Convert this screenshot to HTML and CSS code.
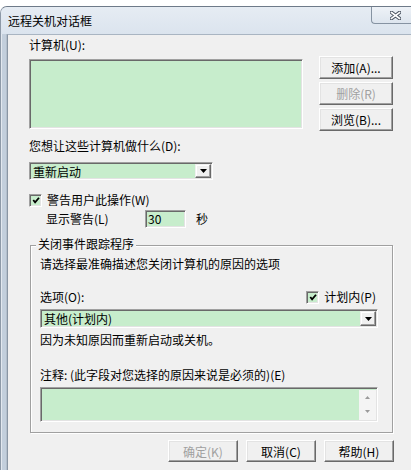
FILE: index.html
```html
<!DOCTYPE html>
<html lang="zh-CN">
<head>
<meta charset="utf-8">
<title>远程关机对话框</title>
<link rel="stylesheet" href="styles.css">
</head>
<body>
<div class="win">
  <div class="shell">
    <div class="titlebar">
      <span class="title">远程关机对话框</span>
      <div class="close">
        <svg width="11" height="9" viewBox="0 0 11 9">
          <path d="M1.5 1.5 L9.5 7.5 M9.5 1.5 L1.5 7.5" stroke="#4d5663" stroke-width="3.6" stroke-linecap="square" fill="none"/>
          <path d="M1.5 1.5 L9.5 7.5 M9.5 1.5 L1.5 7.5" stroke="#ffffff" stroke-width="1.6" stroke-linecap="square" fill="none"/>
        </svg>
      </div>
    </div>
    <div class="client">
      <div class="top-row">
        <div class="left-col">
          <div class="lbl">计算机(U):</div>
          <div class="sunken listbox"></div>
        </div>
        <div class="side-btns">
          <div class="btn side">添加(A)...</div>
          <div class="btn side disabled">删除(R)</div>
          <div class="btn side">浏览(B)...</div>
        </div>
      </div>

      <div class="lbl what">您想让这些计算机做什么(D):</div>
      <div class="sunken combo combo-action">
        <span class="combo-text">重新启动</span>
        <span class="combo-btn"><svg width="7" height="4" viewBox="0 0 7 4"><polygon points="0,0 7,0 3.5,4" fill="#000"/></svg></span>
      </div>

      <div class="check-row warn">
        <span class="sunken checkbox"><svg width="11" height="11" viewBox="0 0 11 11"><polyline points="2.5,5 4.5,7.5 8.8,2.5" fill="none" stroke="#000" stroke-width="2"/></svg></span>
        <span class="lbl">警告用户此操作(W)</span>
      </div>
      <div class="time-row">
        <span class="lbl time-lbl">显示警告(L)</span>
        <span class="sunken input">30</span>
        <span class="lbl sec">秒</span>
      </div>

      <div class="group">
        <span class="legend">关闭事件跟踪程序</span>
        <div class="lbl">请选择最准确描述您关闭计算机的原因的选项</div>
        <div class="opt-row">
          <span class="lbl">选项(O):</span>
          <span class="check-row">
            <span class="sunken checkbox"><svg width="11" height="11" viewBox="0 0 11 11"><polyline points="2.5,5 4.5,7.5 8.8,2.5" fill="none" stroke="#000" stroke-width="2"/></svg></span>
            <span class="lbl">计划内(P)</span>
          </span>
        </div>
        <div class="sunken combo combo-reason">
          <span class="combo-text">其他(计划内)</span>
          <span class="combo-btn"><svg width="7" height="4" viewBox="0 0 7 4"><polygon points="0,0 7,0 3.5,4" fill="#000"/></svg></span>
        </div>
        <div class="lbl reason">因为未知原因而重新启动或关机。</div>
        <div class="lbl note">注释: (此字段对您选择的原因来说是必须的)(E)</div>
        <div class="sunken textarea">
          <span class="ta-body"></span>
          <span class="scroll">
            <svg width="5" height="3" viewBox="0 0 5 3"><polygon points="2.5,0 5,3 0,3" fill="#9a9a9a"/></svg>
            <svg width="5" height="3" viewBox="0 0 5 3"><polygon points="0,0 5,0 2.5,3" fill="#9a9a9a"/></svg>
          </span>
        </div>
      </div>

      <div class="bottom-btns">
        <div class="btn bottom disabled">确定(K)</div>
        <div class="btn bottom">取消(C)</div>
        <div class="btn bottom">帮助(H)</div>
      </div>
    </div>
  </div>
</div>
</body>
</html>
```

FILE: styles.css
```css
* { box-sizing: border-box; }

html, body {
  margin: 0;
  padding: 0;
  background: #ffffff;
}

body {
  font-family: "Noto Sans CJK SC", "Noto Sans", sans-serif;
  font-size: 12px;
  color: #000;
}

.win {
  width: 411px;
  height: 470px;
  padding-top: 6px;
  overflow: hidden;
}

.shell {
  height: 464px;
  border-top: 1px solid #6e7a89;
  border-left: 1px solid #8e9aa8;
  border-top-left-radius: 7px;
  background: linear-gradient(to right, #e2e8ef 0, #e2e8ef 1px, #c3cfdc 1px, #c3cfdc 5px, #b3bfcc 5px, #b3bfcc 6px);
  display: flex;
  flex-direction: column;
  overflow: hidden;
}

.titlebar {
  height: 27px;
  flex-shrink: 0;
  display: flex;
  background: linear-gradient(#e6ecf3, #dbe4ee);
}

.title {
  align-self: center;
  padding-left: 7px;
  padding-top: 1px;
  font-size: 12px;
  line-height: 16px;
  color: #000;
}

.close {
  margin-left: auto;
  margin-right: -7px;
  flex-shrink: 0;
  width: 47px;
  height: 17px;
  border-left: 1px solid #8693a2;
  border-bottom: 1px solid #8693a2;
  border-bottom-left-radius: 4px;
  background: linear-gradient(#eef2f7, #dde5ee);
  display: flex;
  align-items: center;
  justify-content: center;
  padding-top: 1px;
}

.client {
  flex: 1;
  margin-left: 6px;
  border-left: 1px solid #8a96a4;
  border-top: 1px solid #a9b5c2;
  background: #f0f0f0;
  padding: 1px 18px 0 21px;
  display: flex;
  flex-direction: column;
}

.lbl {
  line-height: 18px;
  white-space: nowrap;
}

.sunken {
  border: 1px solid;
  border-color: #a0a0a0 #ffffff #ffffff #a0a0a0;
  box-shadow: inset 1px 1px 0 #696969, inset -1px -1px 0 #e3e3e3;
  background: #c7edcc;
}

.btn {
  border: 1px solid;
  border-color: #ffffff #696969 #696969 #ffffff;
  box-shadow: inset -1px -1px 0 #a0a0a0, inset 1px 1px 0 #e3e3e3;
  background: #f0f0f0;
  display: flex;
  align-items: center;
  justify-content: center;
  white-space: nowrap;
}

.btn.disabled {
  color: #a0a0a0;
}

.top-row {
  display: flex;
  align-items: flex-start;
}

.left-col {
  width: 274px;
  display: flex;
  flex-direction: column;
}

.listbox {
  margin-top: 5px;
  height: 70px;
}

.side-btns {
  margin-left: auto;
  margin-top: 20px;
  display: flex;
  flex-direction: column;
  gap: 3px;
}

.btn.side {
  width: 74px;
  height: 23px;
}

.what {
  margin-top: 6px;
}

.combo {
  display: flex;
  align-items: stretch;
  padding: 1px;
}

.combo-action {
  margin-top: 7px;
  width: 184px;
  height: 18px;
}

.combo-text {
  flex: 1;
  padding-left: 2px;
  line-height: 16px;
  white-space: nowrap;
}

.combo-btn {
  width: 16px;
  border: 1px solid;
  border-color: #f0f0f0 #696969 #696969 #f0f0f0;
  box-shadow: inset -1px -1px 0 #a0a0a0, inset 1px 1px 0 #ffffff;
  background: #f0f0f0;
  display: flex;
  align-items: center;
  justify-content: center;
}

.check-row {
  display: flex;
  align-items: center;
  gap: 5px;
}

.warn {
  margin-top: 11px;
}

.checkbox {
  width: 13px;
  height: 13px;
  display: flex;
  align-items: center;
  justify-content: center;
  padding-left: 1px;
  padding-top: 1px;
}

.time-row {
  margin-top: 1px;
  display: flex;
  align-items: center;
  padding-left: 17px;
}

.time-lbl {
  width: 99px;
}

.input {
  width: 41px;
  height: 18px;
  padding-left: 2px;
  line-height: 16px;
}

.sec {
  margin-left: 10px;
}

.group {
  position: relative;
  margin-top: 17px;
  margin-left: 1px;
  border: 1px solid #a0a0a0;
  box-shadow: 1px 1px 0 #ffffff, inset 1px 1px 0 #ffffff;
  padding: 9px 14px 10px 9px;
  display: flex;
  flex-direction: column;
}

.legend {
  position: absolute;
  top: -11px;
  left: 5px;
  padding: 0 2px;
  background: #f0f0f0;
  line-height: 18px;
  white-space: nowrap;
}

.opt-row {
  margin-top: 15px;
  display: flex;
  align-items: center;
  justify-content: space-between;
  padding-right: 2px;
}

.combo-reason {
  margin-top: 3px;
  height: 19px;
}

.reason {
  margin-top: 3px;
}

.note {
  margin-top: 17px;
}

.textarea {
  margin-top: 3px;
  height: 35px;
  display: flex;
  padding: 2px 1px 1px 2px;
}

.ta-body {
  flex: 1;
}

.scroll {
  width: 17px;
  background: #f4f4f4;
  display: flex;
  flex-direction: column;
  align-items: center;
  justify-content: space-between;
  padding: 6px 0 7px;
}

.bottom-btns {
  margin-top: 7px;
  display: flex;
  justify-content: flex-end;
  gap: 8px;
  margin-right: -1px;
}

.btn.bottom {
  width: 70px;
  height: 22px;
}
```
